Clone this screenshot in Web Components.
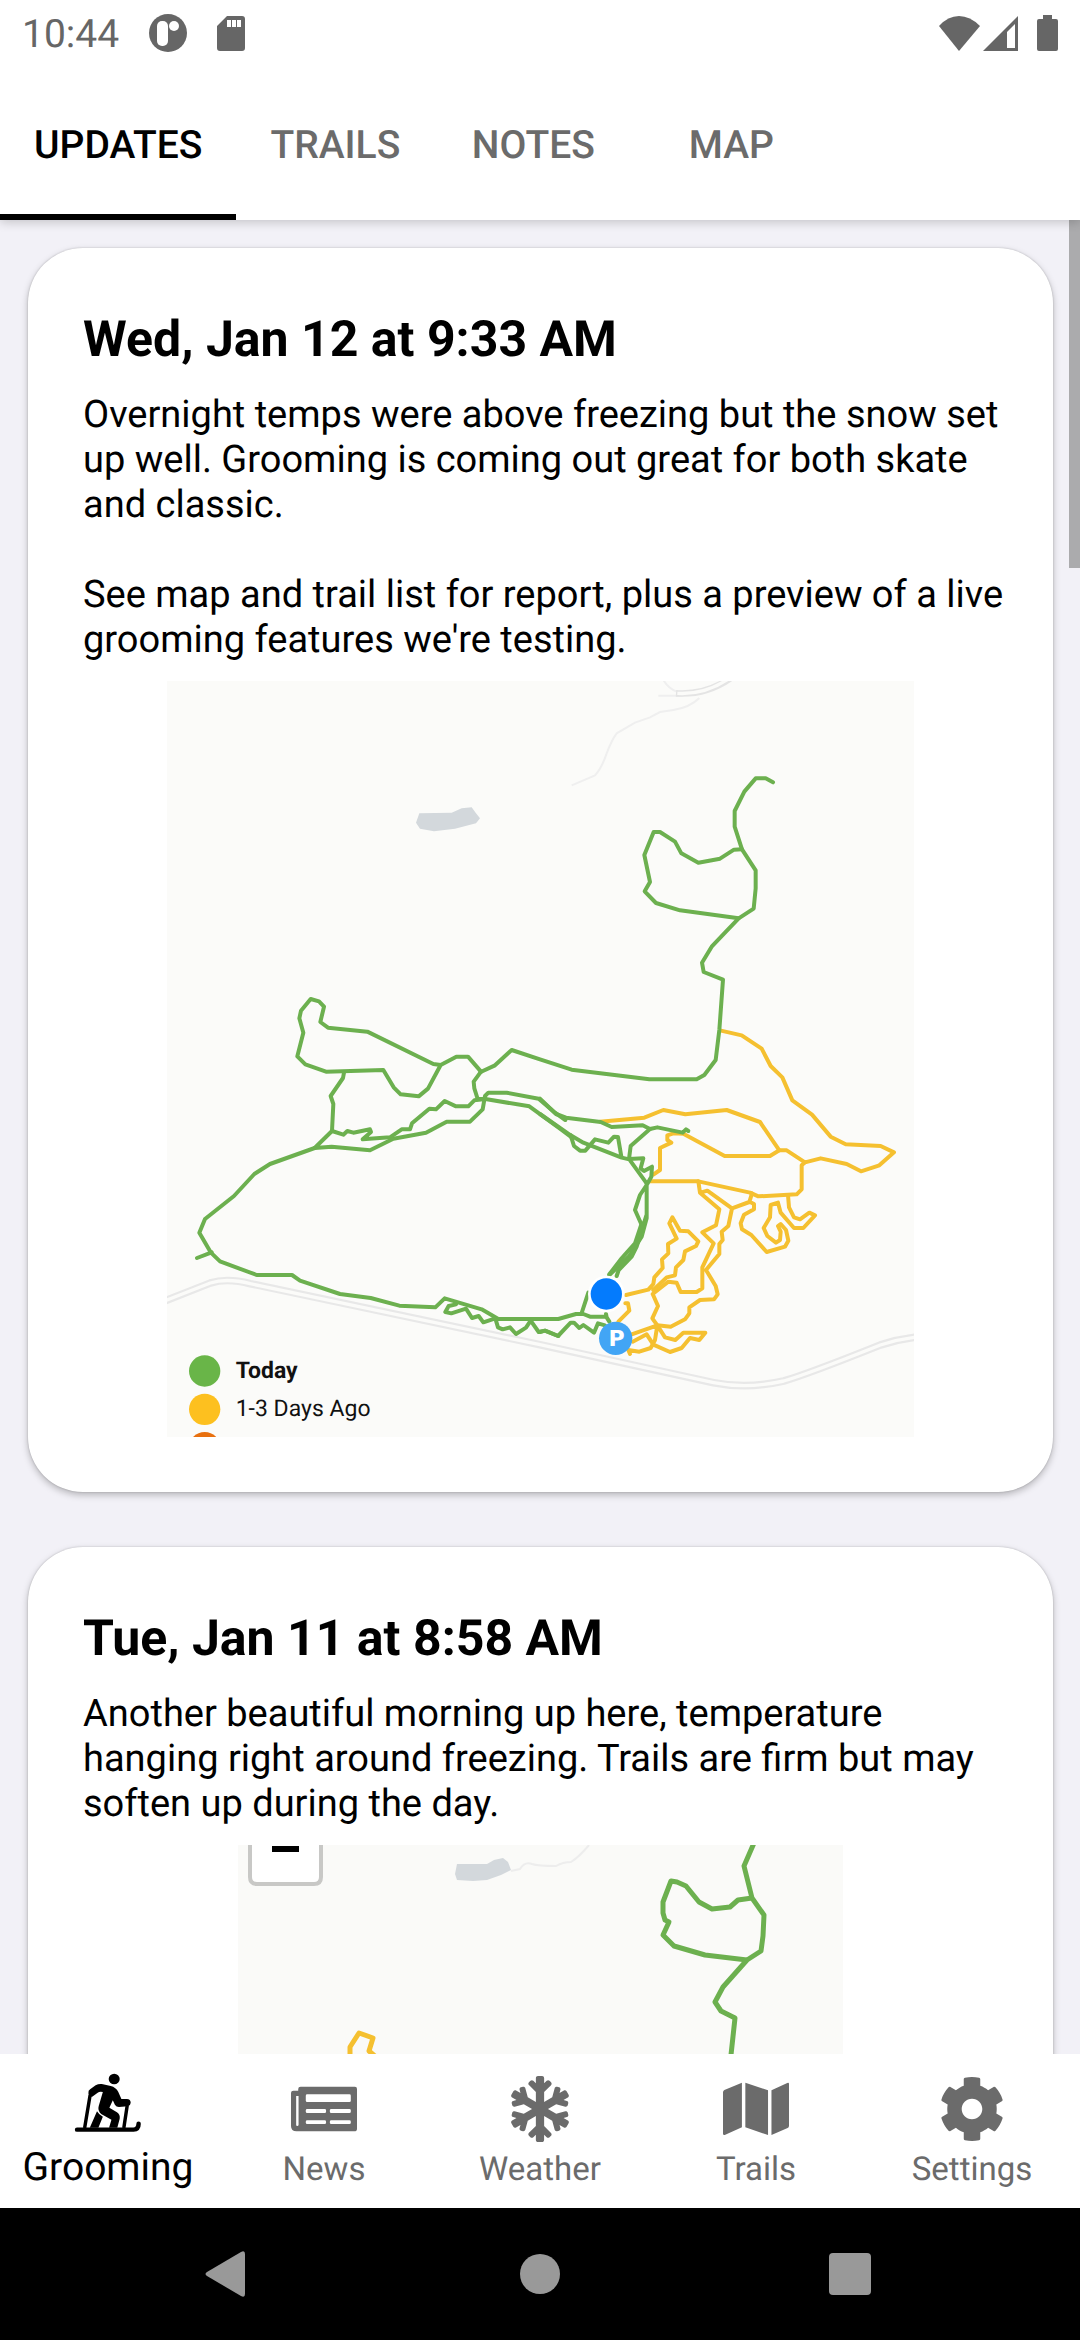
<!DOCTYPE html>
<html lang="en">
<head>
<meta charset="utf-8">
<meta name="viewport" content="width=device-width, initial-scale=1">
<title>Grooming updates</title>
<style>
  html, body {
    height: 100%;
    margin: 0;
  }
  body {
    font-family: Roboto, "Liberation Sans", sans-serif;
    font-size: 38px;
    line-height: 45px;
    text-rendering: geometricPrecision;
    color: #000;
    background: #f2f1f7;
  }
</style>
</head>
<body>
<grooming-app>
  <status-bar slot="top" time="10:44"></status-bar>
  <tab-strip slot="top">
    <tab-button selected>Updates</tab-button>
    <tab-button>Trails</tab-button>
    <tab-button>Notes</tab-button>
    <tab-button>Map</tab-button>
  </tab-strip>

  <update-card heading="Wed, Jan 12 at 9:33 AM">
    <p>Overnight temps were above freezing but the snow set up well. Grooming is coming out great for both skate and classic.</p>
    <p>See map and trail list for report, plus a preview of a live grooming features we're testing.</p>
    <trail-map slot="map" view="full"></trail-map>
  </update-card>

  <update-card heading="Tue, Jan 11 at 8:58 AM">
    <p>Another beautiful morning up here, temperature hanging right around freezing. Trails are firm but may soften up during the day.</p>
    <trail-map slot="map" view="north"></trail-map>
  </update-card>

  <bottom-nav slot="bottom">
    <nav-item href="#grooming" icon="grooming" active>Grooming</nav-item>
    <nav-item href="#news" icon="news">News</nav-item>
    <nav-item href="#weather" icon="weather">Weather</nav-item>
    <nav-item href="#trails" icon="trails">Trails</nav-item>
    <nav-item href="#settings" icon="settings">Settings</nav-item>
  </bottom-nav>
  <system-nav slot="bottom"></system-nav>
</grooming-app>

<script>
const ICONS = {
  grooming: `
    <svg width="66" height="66" viewBox="218 108 192 198" preserveAspectRatio="none" aria-hidden="true">
      <ellipse cx="332" cy="117" rx="16" ry="16"/>
      <path d="M257 160Q256 151 262 148L278 136Q286 131 296 132L322 138Q337 142 344 156L353 177H369Q380 178 380 188Q380 195 372 199L346 201Q338 201 334 194L328 181L318 203L340 217Q350 224 348 236L341 263H317L324 239L294 222Q283 212 287 198L299 156Q290 153 284 158L268 170Q258 172 257 160Z"/>
      <path d="M282 214Q288 225 299 230L286 263H261Z"/>
      <path d="M262 165L246 264M370 196L360 264" fill="none" stroke="currentColor" stroke-width="10"/>
      <path d="M224 269H388Q403 268 403 251" fill="none" stroke="currentColor" stroke-width="13" stroke-linecap="round"/>
    </svg>`,
  news: `
    <svg width="66" height="66" viewBox="845 107 192 198" preserveAspectRatio="none" aria-hidden="true">
      <path fill-rule="evenodd" d="M873 139H1031Q1037 139 1037 146V265Q1037 273 1029 273H861Q845 273 845 257V158Q845 151 852 151H866V146Q866 139 873 139ZM860 167V253Q860 257 863 257Q867 257 867 253V167ZM892 162Q888 162 888 166V181Q888 185 892 185H1015Q1019 185 1019 181V166Q1019 162 1015 162ZM892 206Q888 206 888 210V214Q888 218 892 218H943Q947 218 947 214V210Q947 206 943 206ZM962 206Q958 206 958 210V214Q958 218 962 218H1015Q1019 218 1019 214V210Q1019 206 1015 206ZM892 240Q888 240 888 244V247Q888 251 892 251H943Q947 251 947 247V244Q947 240 943 240ZM962 240Q958 240 958 244V247Q958 251 962 251H1015Q1019 251 1019 247V244Q1019 240 1015 240Z"/>
    </svg>`,
  weather: `
    <svg width="58" height="66" viewBox="0 0 448 512" aria-hidden="true">
      <path d="M440.300 345.200l-33.800-19.500 26-7c8.200-2.200 13.100-10.700 10.900-18.900l-4-14.900c-2.200-8.200-10.700-13.100-18.900-10.900l-70.800 19-63.900-37 63.800-36.900 70.800 19c8.200 2.200 16.700-2.700 18.900-10.900l4-14.900c2.200-8.200-2.700-16.700-10.900-18.900l-26-7 33.800-19.500c7.400-4.300 9.900-13.700 5.700-21.100L430.400 119c-4.300-7.400-13.700-9.900-21.100-5.700l-33.800 19.500 7-26c2.200-8.200-2.700-16.700-10.900-18.900l-14.900-4c-8.200-2.200-16.700 2.700-18.900 10.900l-19 70.800-62.800 36.200v-77.500l53.700-53.100c6.200-6.200 6.200-16.400 0-22.600l-11.300-11.300c-6.200-6.200-16.400-6.200-22.600 0L256 56.400V16c0-8.800-7.200-16-16-16h-32c-8.800 0-16 7.200-16 16v40.400l-19.700-19.700c-6.200-6.200-16.400-6.200-22.600 0L138.300 48c-6.300 6.200-6.300 16.400 0 22.600l53.700 53.100v77.500l-62.800-36.200-19-70.800c-2.200-8.200-10.700-13.100-18.900-10.900l-14.900 4c-8.200 2.200-13.100 10.700-10.900 18.900l7 26-33.800-19.500c-7.400-4.300-16.800-1.700-21.100 5.700L2.100 145.700c-4.300 7.400-1.700 16.800 5.700 21.100l33.800 19.500-26 7c-8.300 2.200-13.200 10.700-11 19l4 14.900c2.200 8.200 10.700 13.100 18.900 10.900l70.800-19 63.800 36.900-63.800 36.900-70.800-19c-8.200-2.200-16.700 2.700-18.900 10.900l-4 14.900c-2.200 8.200 2.700 16.700 10.900 18.900l26 7-33.800 19.600c-7.400 4.300-9.900 13.700-5.700 21.100l15.500 26.800c4.300 7.400 13.700 9.900 21.100 5.700l33.800-19.500-7 26c-2.200 8.200 2.700 16.700 10.900 18.900l14.900 4c8.200 2.200 16.700-2.700 18.900-10.900l19-70.800 62.800-36.200v77.500l-53.700 53.100c-6.300 6.200-6.300 16.400 0 22.600l11.300 11.300c6.200 6.200 16.400 6.200 22.600 0l19.700-19.700V496c0 8.800 7.200 16 16 16h32c8.800 0 16-7.200 16-16v-40.400l19.700 19.700c6.200 6.200 16.400 6.200 22.600 0l11.300-11.300c6.300-6.200 6.300-16.400 0-22.600L256 388.300v-77.500l62.800 36.200 19 70.800c2.200 8.200 10.700 13.100 18.900 10.900l14.900-4c8.200-2.200 13.100-10.700 10.900-18.900l-7-26 33.800 19.500c7.400 4.300 16.800 1.700 21.100-5.700l15.500-26.800c4.300-7.300 1.800-16.800-5.600-21z"/>
    </svg>`,
  trails: `
    <svg width="66" height="66" viewBox="531 108 192 198" preserveAspectRatio="none" aria-hidden="true">
      <path d="M531 157Q531 152 535 150L586 128V262L536 285Q531 286 531 281ZM596 128L662 151V285L596 262ZM672 151L718 129Q723 127 723 132V257Q723 262 719 264L672 285Z"/>
    </svg>`,
  settings: `
    <svg width="66" height="66" viewBox="0 0 512 512" aria-hidden="true">
      <path d="M487.400 315.700l-42.600-24.600c4.300-23.200 4.300-47 0-70.200l42.600-24.600c4.900-2.800 7.100-8.600 5.500-14-11.100-35.600-30-67.800-54.700-94.600-3.800-4.100-10-5.100-14.800-2.300L380.800 110c-17.900-15.400-38.500-27.300-60.800-35.100V25.800c0-5.600-3.900-10.500-9.400-11.700-36.700-8.200-74.300-7.800-109.200 0-5.500 1.200-9.400 6.100-9.400 11.700V75c-22.200 7.900-42.800 19.800-60.800 35.100L88.700 85.500c-4.900-2.800-11-1.900-14.800 2.300-24.700 26.700-43.600 58.900-54.700 94.600-1.700 5.400.6 11.200 5.500 14L67.300 221c-4.300 23.200-4.300 47 0 70.200l-42.600 24.600c-4.900 2.800-7.100 8.600-5.500 14 11.100 35.600 30 67.800 54.700 94.600 3.800 4.100 10 5.100 14.800 2.300l42.600-24.600c17.900 15.400 38.500 27.300 60.800 35.100v49.200c0 5.600 3.900 10.500 9.400 11.700 36.700 8.200 74.300 7.800 109.200 0 5.500-1.200 9.400-6.100 9.400-11.700v-49.200c22.200-7.900 42.800-19.800 60.800-35.100l42.600 24.600c4.900 2.800 11 1.900 14.800-2.300 24.700-26.700 43.600-58.900 54.700-94.600 1.500-5.500-.7-11.300-5.600-14.100zM256 336c-44.100 0-80-35.900-80-80s35.900-80 80-80 80 35.900 80 80-35.900 80-80 80z"/>
    </svg>`,
};

const MAPS = {
  // whole trail system with the legend
  full: `
    <svg width="747" height="756" viewBox="0 0 2241 2268" role="img" aria-label="Grooming map">
      <rect width="2241" height="2268" fill="#fbfbf9"/>
      <g transform="translate(-21 -3)">
        <path fill="#d3d8dc" d="M778 400L875 398L905 385L935 382L948 400L960 415L948 430L885 446L822 454L780 446L768 428Z"/>
      </g>
      <g fill="none" stroke="#efefef" stroke-width="6" transform="translate(1119 -3)">
        <path d="M95 316L165 286Q185 265 200 220Q215 180 230 160L285 128L330 112L360 96L400 90Q450 82 478 54"/>
        <path d="M370 0Q385 25 410 35M355 47H430"/>
        <path stroke="#e4e4e4" stroke-width="20" d="M408 40Q500 46 575 -8"/>
        <path stroke="#fbfbf9" stroke-width="10" d="M412 40Q500 45 575 -10"/>
      </g>
      <g fill="none">
        <path stroke="#e8e8e8" stroke-width="23" d="M-10 1861L130 1806Q180 1790 250 1808L1119 1991L1640 2105Q1740 2125 1850 2100Q1920 2080 2140 1992Q2200 1972 2260 1967"/>
        <path stroke="#fbfbf9" stroke-width="10" d="M-10 1861L130 1806Q180 1790 250 1808L1119 1991L1640 2105Q1740 2125 1850 2100Q1920 2080 2140 1992Q2200 1972 2260 1967"/>
      </g>

      <g fill="none" stroke="#f5c030" stroke-width="12" stroke-linejoin="round" stroke-linecap="round">
        <g transform="translate(1119 897)">
          <path d="M543 152L605 166L665 206L692 258L727 292L757 361L816 404L872 470L917 493L1022 498L1062 517L1018 556L963 574L920 552L842 535L795 547L740 511H718L660 426L560 390L436 403L370 390L313 413L180 425"/>
          <path d="M718 511L690 528H554L430 461L400 460L382 466V480L394 488L360 504V570L340 584"/>
          <path d="M795 547L785 556V628L770 643L655 649L630 638L475 604H330"/>
        </g>
        <g transform="translate(1119 1497)">
          <path d="M475 4L480 38L538 88L528 136L487 157L521 190L487 262V325L470 336H422L410 308L385 305L338 342L354 378L337 415L352 436L392 440L435 418L448 400V382L480 360L522 358L533 343L527 318L498 270L538 222V192L548 180L545 155L565 138L576 85L502 32L482 38"/>
          <path d="M576 85L628 66L636 40M630 66L642 72V88L612 104L602 130L606 148L634 165L680 216L735 200L745 182L738 150L722 132L714 138L722 155L720 180L708 188L682 168L671 144L690 112L692 75L714 68L722 98L762 144H790L825 106L808 98L780 118L762 112L747 82L744 45"/>
          <path d="M258 345L325 329L340 312L343 292L368 264L366 238L385 220L384 192L410 176L388 130L397 112L420 152L445 154L475 184L468 198L435 214L430 240L408 262L405 286L380 292L340 330"/>
          <path d="M256 370H264L268 392L235 425M275 463L352 436L375 472L406 480L430 458H496L478 480L450 474L425 504L390 516L340 494L320 463L278 485M352 436L345 480L332 504L298 515L265 510L270 522"/>
        </g>
      </g>

      <g fill="none" stroke="#6cb04f" stroke-width="12" stroke-linejoin="round" stroke-linecap="round">
        <g transform="translate(1119 -3)">
          <path d="M699 307L677 295H647L613 335L584 393V440L606 508L647 571V625L641 686L596 715L555 758L515 800L486 848L491 876L549 899L538 1050L527 1140L493 1185L470 1198H328L95 1169L0 1138L-85 1110L-135 1156L-178 1176"/>
          <path d="M606 508L582 509L540 536L475 548L424 520L405 485L360 456H341L313 525L330 606L314 634L348 669L420 691L596 715"/>
        </g>
        <g transform="translate(-21 -3)">
          <path d="M963 1175L924 1130H889L842 1155L820 1152L622 1055L504 1043L481 1026L492 980L477 964L452 957L423 992L418 1015L430 1058L412 1129L436 1153L498 1175L670 1170L701 1222L722 1243L776 1249L804 1226L842 1155"/>
        </g>
        <g transform="translate(-21 1137)">
          <path d="M963 35L941 65L943 85L953 117H976L1108 139L1200 206L1232 230"/>
          <path d="M552 38L549 54L512 108L520 132L516 213L464 264L515 260L630 271L700 236L798 218L860 185H930L968 148L975 108L985 98H1040L1136 116L1185 158L1216 180"/>
          <path d="M516 213L550 224L562 213L580 218L630 208L633 216L608 238L690 232L725 208H750L756 190L808 146L828 148L854 123L888 139H925L943 121L976 117"/>
          <path d="M464 264L330 312L283 342L222 408L135 477L118 518L152 577L180 604L290 645H396L420 662L540 702L632 714L718 737L826 742L854 715L965 748L1015 777H1195L1248 762H1270L1290 770H1338"/>
          <path d="M111 594L155 577M888 733L866 738L856 756L874 760L918 746L936 774L956 768L970 787L1006 775L1014 802L1028 808L1050 802L1068 822L1098 803L1112 782L1136 816L1155 812L1195 828"/>
        </g>
        <g transform="translate(1119 897)">
          <path d="M0 356L48 402L78 413L182 426L215 441L308 436L330 447L352 442L428 458L438 448L445 453M0 402L92 466L130 488L245 533L268 538L320 610"/>
          <path d="M330 447L272 498L267 537L310 535L302 565L312 573L336 560L334 590L320 615L300 645L285 690L305 735M320 610V715L305 770L268 828L208 885M92 466L102 498L120 512H136L165 478L205 488L222 470L234 471L244 530"/>
        </g>
        <g transform="translate(1119 1497)">
          <path d="M305 130L285 190L245 235L208 283M318 110L290 200L275 230L236 270L230 288M145 338L124 402M198 402L200 412L208 425"/>
          <path d="M0 456L15 452L54 468L92 428H102L118 444L130 435L162 458L174 430L195 436"/>
        </g>
      </g>

      <g transform="translate(1119 1497)">
        <circle cx="199" cy="342" r="55" fill="#fff"/>
        <circle cx="199" cy="342" r="47" fill="#047bfd"/>
        <circle cx="227" cy="475" r="50" fill="#42a5f5"/>
        <text x="230" y="498" fill="#fff" font-family="DejaVu Sans" font-size="66" font-weight="700" text-anchor="middle">P</text>
      </g>

      <g transform="translate(-21 1137)" font-size="69" fill="#111">
        <circle cx="134" cy="933" r="47" fill="#69b548"/>
        <circle cx="134" cy="1048" r="47" fill="#fdc01f"/>
        <circle cx="134" cy="1163" r="47" fill="#e8700f"/>
        <text x="227" y="953" font-weight="700">Today</text>
        <text x="227" y="1068">1-3 Days Ago</text>
      </g>
    </svg>`,
  // closer view of the north loop
  north: `
    <svg width="605" height="756" viewBox="0 0 605 756" role="img" aria-label="Grooming map, north loop">
      <rect width="605" height="756" fill="#fafaf8"/>
      <path fill="#d3d8dc" d="M219 19H249L256 15L265 13L270 17L273 25L263 30L249 35L235 36L219 35L217 29Z"/>
      <path fill="none" stroke="#ededed" stroke-width="2" d="M273 26L282 24Q287 16 294 19Q300 21 318 21Q325 17 333 17Q341 12 351 0"/>
      <g fill="none" stroke="#6cb04f" stroke-width="5" stroke-linejoin="round">
        <path d="M516 -2L506 21L514 53L526 70L525 91L523 106L509 115L485 142L477 157L483 166L497 173L493 210L488 300"/>
        <path d="M514 53L500 55L492 62L474 64L461 57L448 41L439 37L433 36L425 57V68L427 75L431 77L425 90L436 101L467 110L509 115"/>
      </g>
      <path fill="none" stroke="#f5c030" stroke-width="5" stroke-linejoin="round" d="M114 230L112 210V202L121 188L135 193L131 206L138 212L180 216"/>
      <path d="M12 -6V32Q12 39 19 39H76Q83 39 83 32V-6" fill="#fff" stroke="#c8c8c6" stroke-width="4"/>
      <rect x="34" y="1" width="27" height="6"/>
    </svg>`,
};

class GroomingApp extends HTMLElement {
  constructor() {
    super();
    this.attachShadow({ mode: 'open' });
    this.shadowRoot.innerHTML = `
      <style>
        :host {
          display: flex;
          flex-direction: column;
          height: 100vh;
        }
        header {
          position: relative;
          z-index: 1;
          background: #fff;
          box-shadow: 0 2px 10px rgba(0, 0, 0, 0.2);
        }
        main {
          position: relative;
          flex: 1;
          min-height: 0;
          overflow: hidden;
        }
        .feed {
          display: flex;
          flex-direction: column;
          gap: 55px;
          padding: 28px 27px 28px 28px;
        }
        .thumb {
          position: absolute;
          top: 0;
          right: 0;
          width: 11px;
          height: 19%;
          background: #ababad;
        }
        footer {
          background: #fff;
        }
      </style>
      <header><slot name="top"></slot></header>
      <main>
        <div class="feed"><slot></slot></div>
        <div class="thumb"></div>
      </main>
      <footer><slot name="bottom"></slot></footer>
    `;
  }
}

class StatusBar extends HTMLElement {
  constructor() {
    super();
    this.attachShadow({ mode: 'open' });
    this.shadowRoot.innerHTML = `
      <style>
        :host {
          display: flex;
          align-items: center;
          justify-content: space-between;
          height: 66px;
          padding: 0 22px;
          font-size: 39px;
          color: #666;
        }
        div {
          display: flex;
          align-items: center;
        }
        .left svg {
          margin-left: 30px;
        }
        #time {
          padding-top: 2px;
        }
        svg {
          display: block;
          fill: currentColor;
        }
        .battery {
          margin-left: 19px;
        }
      </style>
      <div class="left">
        <span id="time"></span>
        <svg width="38" height="38" viewBox="0 0 38 38" aria-hidden="true">
          <circle cx="19" cy="19" r="19"/>
          <rect x="8" y="7" width="11" height="25" rx="5" fill="#fff"/>
          <circle cx="25" cy="12" r="5" fill="#fff"/>
        </svg>
        <svg width="28" height="35" viewBox="0 0 28 35" aria-hidden="true">
          <path fill-rule="evenodd" d="M10 0H25Q28 0 28 3V32Q28 35 25 35H3Q0 35 0 32V10ZM10 4V11H14V4ZM15 4V11H19V4ZM20 4V11H24V4Z"/>
        </svg>
      </div>
      <div>
        <svg width="44" height="35" viewBox="0 0 44 35" aria-hidden="true">
          <path d="M0 10Q9 0 20 0T41 10L20 35Z"/>
        </svg>
        <svg width="35" height="35" viewBox="0 0 35 35" aria-hidden="true">
          <path fill-rule="evenodd" d="M35 0V35H0ZM24 16V32H32V8Z"/>
        </svg>
        <svg class="battery" width="21" height="36" viewBox="0 0 21 36" aria-hidden="true">
          <path d="M6 0H15V4H19Q21 4 21 6V34Q21 36 19 36H2Q0 36 0 34V6Q0 4 2 4H6Z"/>
        </svg>
      </div>
    `;
  }

  connectedCallback() {
    this.shadowRoot.querySelector('#time').textContent = this.getAttribute('time');
  }
}

class TabStrip extends HTMLElement {
  constructor() {
    super();
    this.attachShadow({ mode: 'open' });
    this.shadowRoot.innerHTML = `
      <style>
        :host {
          display: flex;
          height: 154px;
        }
      </style>
      <slot></slot>
    `;
    this.setAttribute('role', 'tablist');
  }
}

class TabButton extends HTMLElement {
  constructor() {
    super();
    this.attachShadow({ mode: 'open' });
    this.shadowRoot.innerHTML = `
      <style>
        :host {
          display: flex;
          min-width: 198px;
        }
        button {
          flex: 1;
          padding: 10px 34px 0;
          border: 0;
          border-bottom: 6px solid transparent;
          background: none;
          font: inherit;
          font-size: 39px;
          font-weight: 500;
          text-rendering: inherit;
          text-transform: uppercase;
          color: #6b6b6b;
        }
        :host([selected]) button {
          color: #000;
          border-bottom-color: #000;
        }
      </style>
      <button type="button" role="tab"><slot></slot></button>
    `;
  }

  connectedCallback() {
    const button = this.shadowRoot.querySelector('button');
    button.setAttribute('aria-selected', this.hasAttribute('selected'));
    button.addEventListener('click', () => this.select());
  }

  select() {
    for (const tab of this.parentElement.children) {
      tab.toggleAttribute('selected', tab === this);
      tab.shadowRoot.querySelector('button').setAttribute('aria-selected', tab === this);
    }
  }
}

class UpdateCard extends HTMLElement {
  constructor() {
    super();
    this.attachShadow({ mode: 'open' });
    this.shadowRoot.innerHTML = `
      <style>
        :host {
          display: block;
          padding: 55px;
          border-radius: 55px;
          background: #fff;
          box-shadow: 0 0 2px rgba(0, 0, 0, 0.2), 0 3px 7px rgba(0, 0, 0, 0.25);
        }
        h2 {
          margin: 0 0 16px;
          font-size: 50px;
          line-height: 74px;
          font-weight: 700;
        }
        .text {
          display: flex;
          flex-direction: column;
          gap: 45px;
          margin: 0 -14px 18px 0;
        }
        ::slotted(p) {
          margin: 0;
        }
      </style>
      <h2></h2>
      <div class="text"><slot></slot></div>
      <slot name="map"></slot>
    `;
  }

  connectedCallback() {
    this.shadowRoot.querySelector('h2').textContent = this.getAttribute('heading');
  }
}

class TrailMap extends HTMLElement {
  constructor() {
    super();
    this.attachShadow({ mode: 'open' });
  }

  connectedCallback() {
    this.shadowRoot.innerHTML = `
      <style>
        :host {
          display: flex;
          justify-content: center;
        }
        svg {
          display: block;
          max-width: 100%;
        }
      </style>
      ${MAPS[this.getAttribute('view')]}
    `;
  }
}

class BottomNav extends HTMLElement {
  constructor() {
    super();
    this.attachShadow({ mode: 'open' });
    this.shadowRoot.innerHTML = `
      <style>
        :host {
          display: block;
        }
        nav {
          display: grid;
          grid-template-columns: repeat(5, 1fr);
          height: 154px;
        }
      </style>
      <nav><slot></slot></nav>
    `;
  }
}

class NavItem extends HTMLElement {
  constructor() {
    super();
    this.attachShadow({ mode: 'open' });
  }

  connectedCallback() {
    this.shadowRoot.innerHTML = `
      <style>
        :host {
          display: block;
          color: #6b6b6b;
          font-size: 33px;
        }
        :host([active]) {
          color: #000;
          font-size: 39px;
        }
        a {
          display: flex;
          flex-direction: column;
          align-items: center;
          gap: 5px;
          padding-top: 22px;
          color: inherit;
          text-decoration: none;
        }
        :host([active]) a {
          gap: 3px;
        }
        svg {
          display: block;
          overflow: visible;
          fill: currentColor;
        }
      </style>
      <a href="${this.getAttribute('href')}">
        ${ICONS[this.getAttribute('icon')]}
        <span><slot></slot></span>
      </a>
    `;
  }
}

class SystemNav extends HTMLElement {
  constructor() {
    super();
    this.attachShadow({ mode: 'open' });
    this.shadowRoot.innerHTML = `
      <style>
        :host {
          display: grid;
          grid-template-columns: repeat(3, 1fr);
          height: 132px;
          padding: 0 7%;
          background: #000;
        }
        button {
          display: flex;
          align-items: center;
          justify-content: center;
          padding: 0;
          border: 0;
          background: none;
        }
        svg {
          display: block;
          fill: #999;
        }
      </style>
      <button type="button" aria-label="Back">
        <svg width="50" height="46" viewBox="0 0 50 46"><path d="M2 21L36 1Q40 -1 40 3V43Q40 47 36 45L2 25Q-1 23 2 21Z"/></svg>
      </button>
      <button type="button" aria-label="Home">
        <svg width="40" height="40" viewBox="0 0 40 40"><circle cx="20" cy="20" r="20"/></svg>
      </button>
      <button type="button" aria-label="Overview">
        <svg width="42" height="42" viewBox="0 0 42 42"><rect width="42" height="42" rx="4"/></svg>
      </button>
    `;
  }
}

customElements.define('grooming-app', GroomingApp);
customElements.define('status-bar', StatusBar);
customElements.define('tab-strip', TabStrip);
customElements.define('tab-button', TabButton);
customElements.define('update-card', UpdateCard);
customElements.define('trail-map', TrailMap);
customElements.define('bottom-nav', BottomNav);
customElements.define('nav-item', NavItem);
customElements.define('system-nav', SystemNav);
</script>
</body>
</html>
